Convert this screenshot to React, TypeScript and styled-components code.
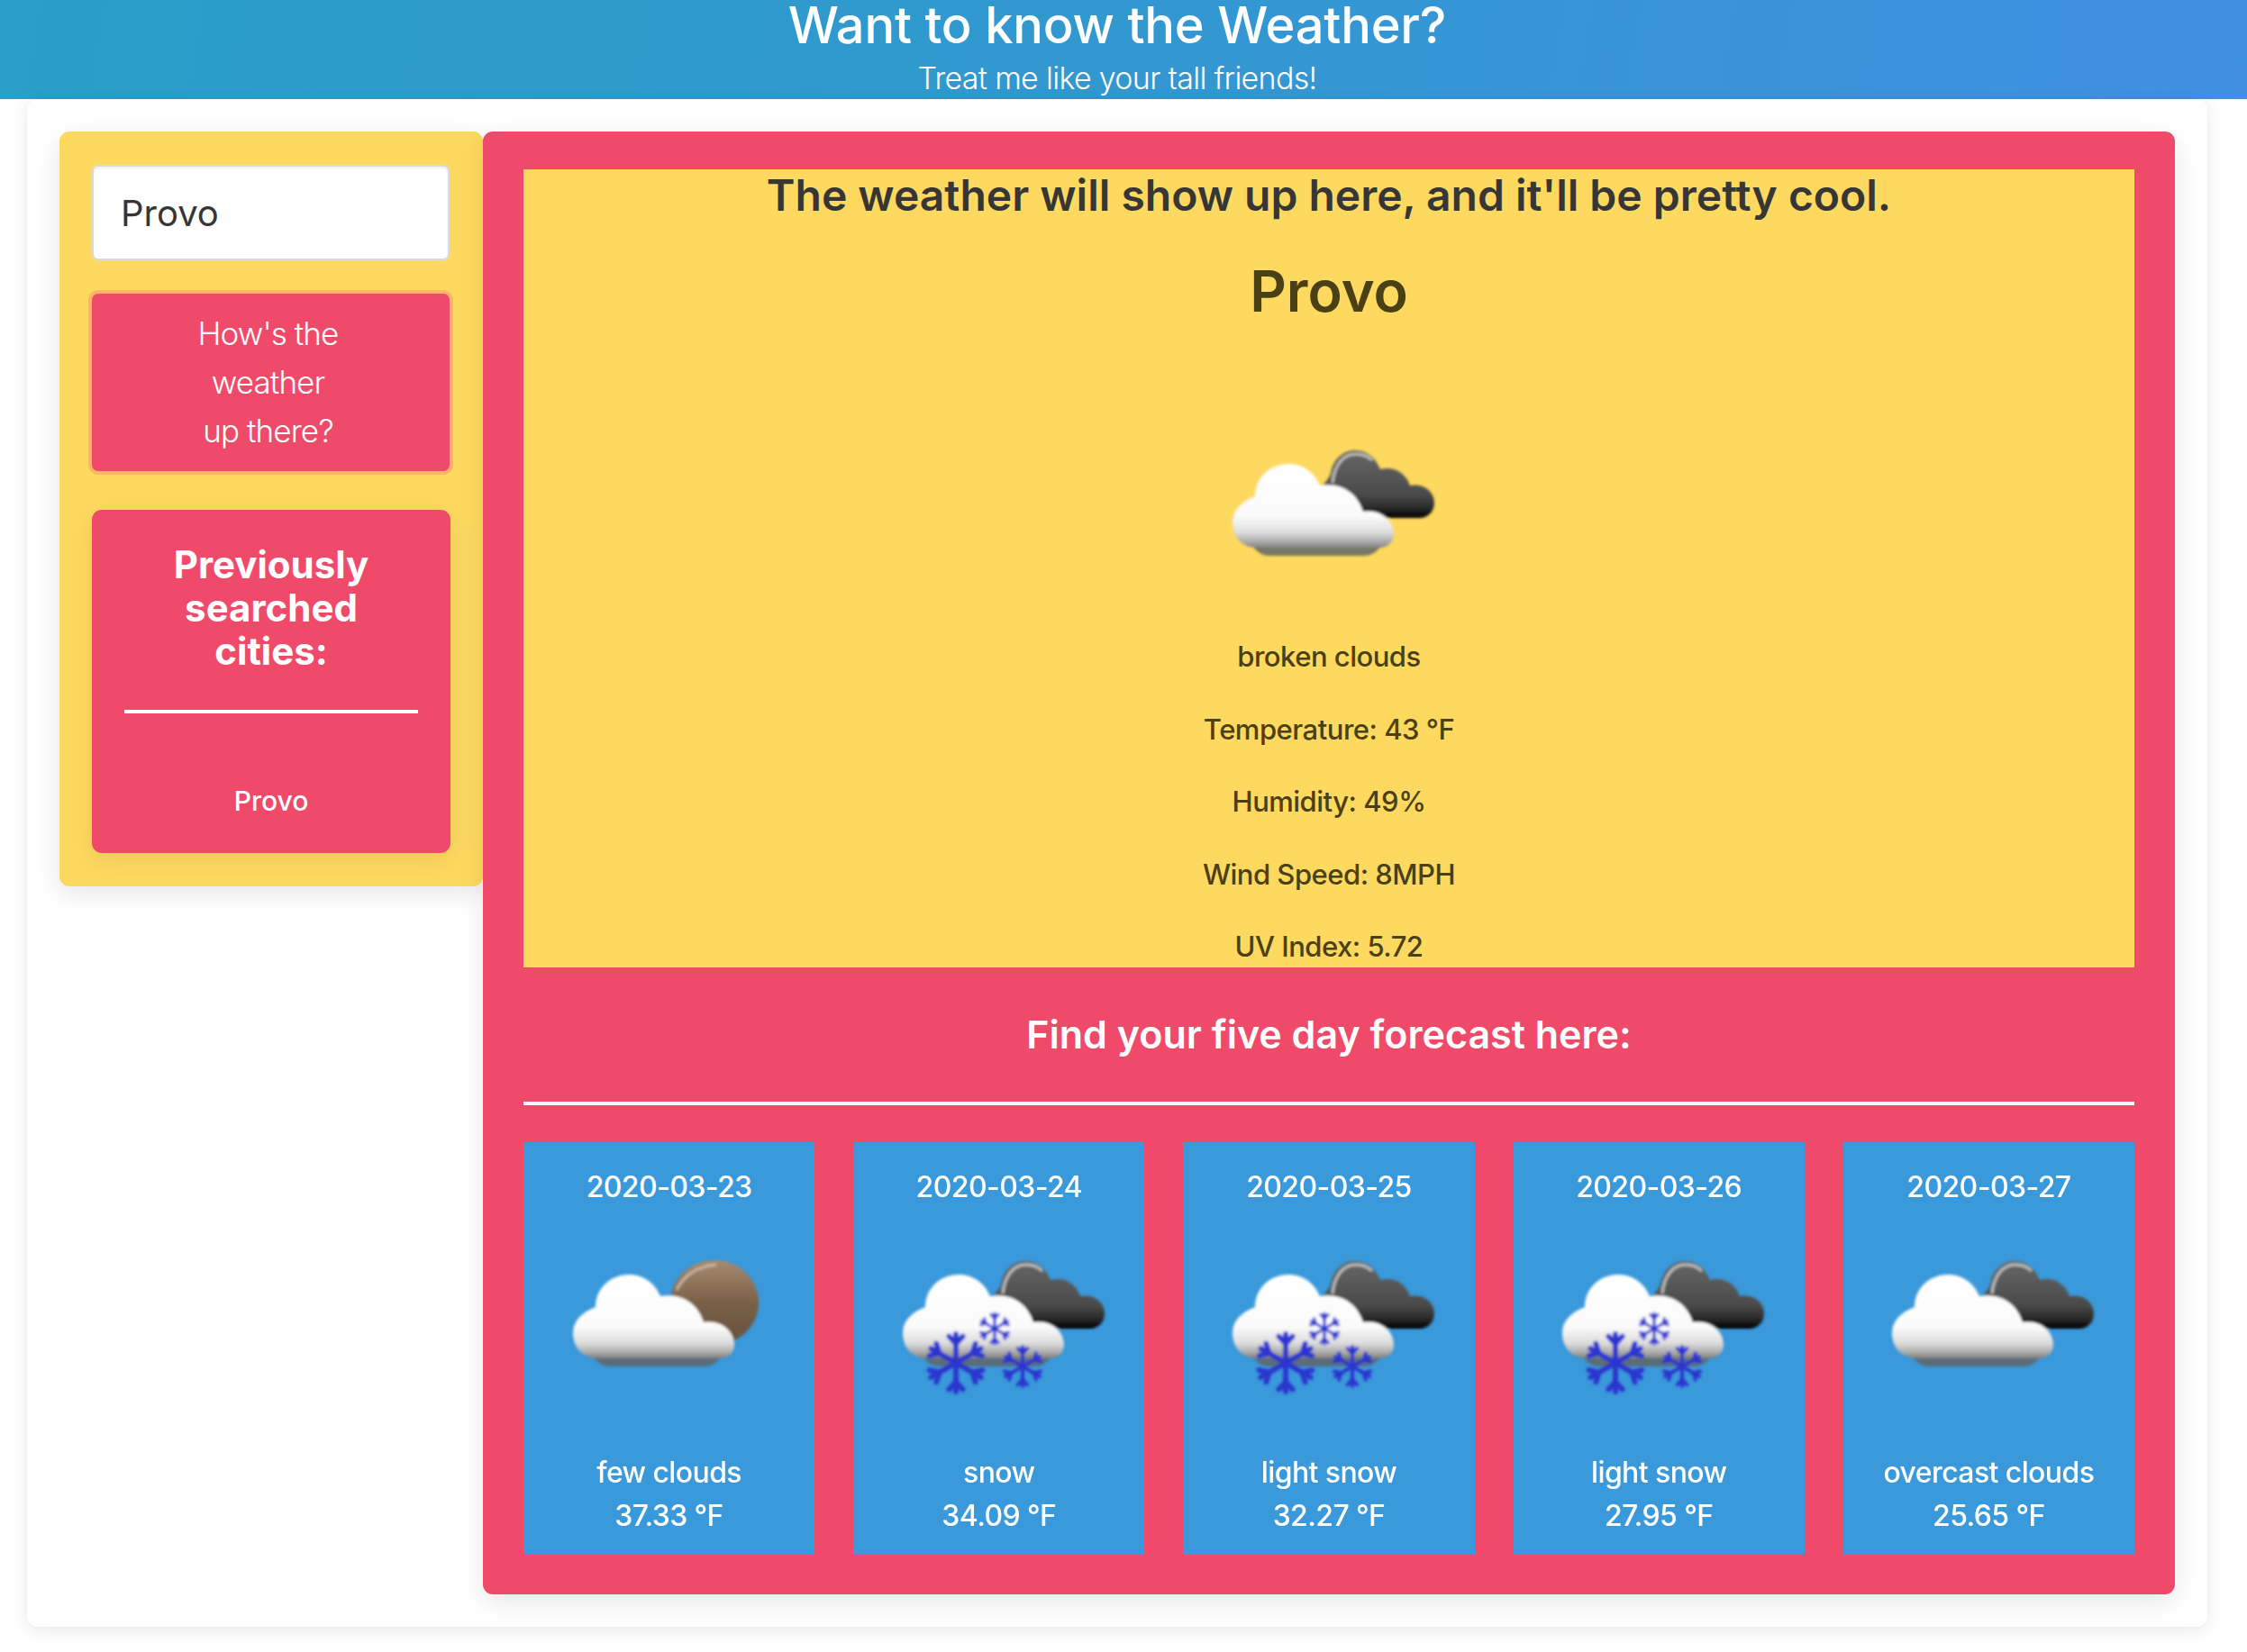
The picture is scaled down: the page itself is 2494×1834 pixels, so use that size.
import React from 'react';
import styled, { createGlobalStyle } from 'styled-components';

const GlobalStyle = createGlobalStyle`
  html, body {
    margin: 0;
    padding: 0;
    background: #ffffff;
    font-family: Inter, "Noto Sans", sans-serif;
    color: #363636;
  }
  * {
    box-sizing: border-box;
  }
`;

const Page = styled.div`
  width: 2494px;
  height: 1834px;
  overflow: hidden;
`;

const Hero = styled.header`
  height: 110px;
  padding-right: 14px;
  background: linear-gradient(100deg, #2a9fc9 0%, #3298d0 50%, #4190e2 100%);
  color: #ffffff;
  text-align: center;
  overflow: hidden;
`;

const HeroTitle = styled.h1`
  margin: 0;
  height: 60px;
  font-size: 56px;
  line-height: 57px;
  font-weight: 500;
  letter-spacing: -0.2px;
`;

const HeroSubtitle = styled.h2`
  margin: 0;
  font-size: 34px;
  line-height: 53px;
  font-weight: 300;
  letter-spacing: -0.7px;
`;

const Card = styled.main`
  display: flex;
  align-items: flex-start;
  width: 2420px;
  height: 1696px;
  margin-left: 30px;
  padding: 36px;
  background: #ffffff;
  border-radius: 11px;
  box-shadow: 0 4px 18px rgba(10, 10, 10, 0.09), 0 0 2px rgba(10, 10, 10, 0.05);
`;

const Sidebar = styled.aside`
  display: flex;
  flex-direction: column;
  flex: 0 0 469px;
  height: 838px;
  padding: 37px 36px;
  background: #fed960;
  border-radius: 11px;
  box-shadow: 0 8px 28px rgba(10, 10, 10, 0.1);
`;

const SearchInput = styled.input`
  width: 397px;
  height: 106px;
  padding: 2px 30px 0;
  background: #ffffff;
  border: 2px solid #dbdbdb;
  border-radius: 7px;
  box-shadow: inset 0 2px 3px rgba(10, 10, 10, 0.06);
  font-family: inherit;
  font-size: 40px;
  font-weight: 400;
  color: #363636;
  outline: none;
`;

const SearchButton = styled.button`
  width: 397px;
  height: 197px;
  margin-top: 37px;
  padding: 0 6px 0 0;
  background: #f04a6a;
  border: none;
  border-radius: 7px;
  box-shadow: 0 0 0 4px #fcb666;
  color: #ffffff;
  font-family: inherit;
  font-size: 35px;
  line-height: 54px;
  font-weight: 300;
  letter-spacing: -0.9px;
`;

const HistoryBox = styled.section`
  display: flex;
  flex-direction: column;
  align-items: center;
  width: 398px;
  height: 382px;
  margin-top: 43px;
  padding: 37px 36px 0;
  background: #f04a6a;
  border-radius: 11px;
  box-shadow: 0 8px 28px rgba(10, 10, 10, 0.08);
  color: #ffffff;
`;

const HistoryTitle = styled.h3`
  margin: 0;
  font-size: 42px;
  line-height: 48px;
  font-weight: 700;
  text-align: center;
`;

const WhiteRule = styled.hr<{ $gap: number }>`
  width: 100%;
  height: 4px;
  margin: ${(p) => p.$gap}px 0 0;
  background: #ffffff;
  border: none;
`;

const HistoryItem = styled.div`
  margin-top: 75px;
  font-size: 30px;
  line-height: 44px;
  font-weight: 500;
`;

const ResultPanel = styled.section`
  flex: 0 0 1878px;
  height: 1624px;
  padding: 42px 45px;
  background: #f04a6a;
  border-radius: 11px;
  box-shadow: 0 8px 28px rgba(10, 10, 10, 0.1);
`;

const CurrentWeather = styled.div`
  display: flex;
  flex-direction: column;
  align-items: center;
  height: 886px;
  overflow: hidden;
  background: #fed960;
`;

const Lead = styled.h2`
  margin: 0;
  font-size: 48px;
  line-height: 58px;
  font-weight: 600;
  color: #363636;
`;

const CityName = styled.h2`
  margin: 32px 0 0;
  font-size: 63px;
  line-height: 90px;
  font-weight: 600;
  color: #4a4014;
`;

const LargeIcon = styled.div`
  margin-top: 112px;
  height: 170px;
`;

const DetailLine = styled.p<{ $first?: boolean }>`
  margin: ${(p) => (p.$first ? 57 : 36.6)}px 0 0;
  font-size: 31px;
  line-height: 44px;
  font-weight: 500;
  letter-spacing: -0.5px;
  color: #4a4014;
`;

const ForecastTitle = styled.h3`
  margin: 0;
  padding-top: 47px;
  text-align: center;
  font-size: 43px;
  line-height: 54px;
  font-weight: 600;
  color: #ffffff;
`;

const ForecastGrid = styled.div`
  display: grid;
  grid-template-columns: repeat(5, 1fr);
  gap: 43px;
  margin-top: 41px;
`;

const ForecastCard = styled.article`
  display: flex;
  flex-direction: column;
  align-items: center;
  height: 458px;
  padding-top: 26px;
  background: #3a99da;
  color: #ffffff;
  font-size: 32px;
  line-height: 48px;
  font-weight: 500;
  letter-spacing: -0.6px;
`;

const ForecastIcon = styled.div`
  margin-top: 38px;
  height: 170px;
`;

const ForecastDesc = styled.div`
  margin-top: 61px;
`;

type IconKind = 'broken' | 'few' | 'snow' | 'overcast';

const CLOUD_FRONT =
  'M40 128C22 128 13 114 13 100C13 87 22 77 38 71C38 50 55 35 75 35C92 35 104 45 110 59C134 55 152 68 158 88C178 85 192 98 192 113C192 122 185 128 175 128Z';
const CLOUD_BACK =
  'M112 60C118 54 120 50 122 46C124 30 136 20 149 20C163 20 172 29 177 41C191 37 205 44 210 59C224 56 237 65 237 78C237 88 230 95 220 95L160 95Z';

const FLAKE_ANGLES = [0, 60, 120, 180, 240, 300];

const Flake = ({ x, y, r }: { x: number; y: number; r: number }) => (
  <g transform={`translate(${x} ${y})`} stroke="#2a34cf" strokeWidth={r / 5.5} fill="none" strokeLinecap="round">
    {FLAKE_ANGLES.map((a) => (
      <g key={a} transform={`rotate(${a})`}>
        <path d={`M0 0V${-r}`} />
        <path d={`M${-r * 0.24} ${-r * 0.92}L0 ${-r * 0.66}L${r * 0.24} ${-r * 0.92}`} />
      </g>
    ))}
  </g>
);

const WeatherIcon = ({ kind, id }: { kind: IconKind; id: string }) => (
  <svg width="240" height="170" viewBox="0 0 240 170">
    <defs>
      <linearGradient id={`${id}-front`} x1="0" y1="0" x2="0" y2="1">
        <stop offset="0" stopColor="#ffffff" />
        <stop offset="0.62" stopColor="#fbfbfb" />
        <stop offset="0.82" stopColor="#dcdcdc" />
        <stop offset="0.94" stopColor="#a5a5a5" />
        <stop offset="1" stopColor="#7c7c7c" />
      </linearGradient>
      <linearGradient id={`${id}-back`} x1="0" y1="0" x2="0" y2="1">
        <stop offset="0" stopColor="#666666" />
        <stop offset="0.65" stopColor="#4a4a4a" />
        <stop offset="0.85" stopColor="#2a2a2a" />
        <stop offset="1" stopColor="#000000" />
      </linearGradient>
      <linearGradient id={`${id}-sun`} x1="0" y1="0" x2="0" y2="1">
        <stop offset="0" stopColor="#a88a70" />
        <stop offset="0.5" stopColor="#7a6048" />
        <stop offset="1" stopColor="#64503c" />
      </linearGradient>
      <filter id={`${id}-soft`} x="-5%" y="-5%" width="110%" height="110%">
        <feGaussianBlur stdDeviation="1.8" />
      </filter>
    </defs>
    <g filter={`url(#${id}-soft)`}>
      {kind === 'few' ? (
        <>
          <ellipse cx="170" cy="66" rx="49" ry="47" fill={`url(#${id}-sun)`} />
          <path d="M128 52C136 36 150 26 172 24" stroke="#c9b5a3" strokeWidth="3" fill="none" />
        </>
      ) : (
        <>
          <path d={CLOUD_BACK} fill={`url(#${id}-back)`} />
          <path d="M124 56C126 36 136 24 150 24C157 24 163 26 168 31" stroke="#bdbdbd" strokeWidth="3" fill="none" />
        </>
      )}
      <path d="M35 126H178C172 134 166 137 158 137H55C47 137 41 134 35 126Z" fill="#5f6468" opacity="0.85" />
      <path d={CLOUD_FRONT} fill={`url(#${id}-front)`} />
      {kind === 'snow' && (
        <>
          <Flake x={72} y={133} r={32} />
          <Flake x={115} y={95} r={17} />
          <Flake x={146} y={137} r={22} />
        </>
      )}
    </g>
  </svg>
);

const forecast: { date: string; kind: IconKind; desc: string; temp: string }[] = [
  { date: '2020-03-23', kind: 'few', desc: 'few clouds', temp: '37.33 °F' },
  { date: '2020-03-24', kind: 'snow', desc: 'snow', temp: '34.09 °F' },
  { date: '2020-03-25', kind: 'snow', desc: 'light snow', temp: '32.27 °F' },
  { date: '2020-03-26', kind: 'snow', desc: 'light snow', temp: '27.95 °F' },
  { date: '2020-03-27', kind: 'overcast', desc: 'overcast clouds', temp: '25.65 °F' },
];

const App: React.FC = () => {
  return (
    <Page>
      <GlobalStyle />
      <Hero>
        <HeroTitle>Want to know the Weather?</HeroTitle>
        <HeroSubtitle>Treat me like your tall friends!</HeroSubtitle>
      </Hero>
      <Card>
        <Sidebar>
          <SearchInput type="text" defaultValue="Provo" />
          <SearchButton type="button">
            How's the
            <br />
            weather
            <br />
            up there?
          </SearchButton>
          <HistoryBox>
            <HistoryTitle>
              Previously
              <br />
              searched
              <br />
              cities:
            </HistoryTitle>
            <WhiteRule $gap={41} />
            <HistoryItem>Provo</HistoryItem>
          </HistoryBox>
        </Sidebar>
        <ResultPanel>
          <CurrentWeather>
            <Lead>The weather will show up here, and it'll be pretty cool.</Lead>
            <CityName>Provo</CityName>
            <LargeIcon>
              <WeatherIcon kind="broken" id="current" />
            </LargeIcon>
            <DetailLine $first>broken clouds</DetailLine>
            <DetailLine>Temperature: 43 °F</DetailLine>
            <DetailLine>Humidity: 49%</DetailLine>
            <DetailLine>Wind Speed: 8MPH</DetailLine>
            <DetailLine>UV Index: 5.72</DetailLine>
          </CurrentWeather>
          <ForecastTitle>Find your five day forecast here:</ForecastTitle>
          <WhiteRule $gap={48} />
          <ForecastGrid>
            {forecast.map((day) => (
              <ForecastCard key={day.date}>
                <div>{day.date}</div>
                <ForecastIcon>
                  <WeatherIcon kind={day.kind} id={`day-${day.date}`} />
                </ForecastIcon>
                <ForecastDesc>{day.desc}</ForecastDesc>
                <div>{day.temp}</div>
              </ForecastCard>
            ))}
          </ForecastGrid>
        </ResultPanel>
      </Card>
    </Page>
  );
};

export default App;
